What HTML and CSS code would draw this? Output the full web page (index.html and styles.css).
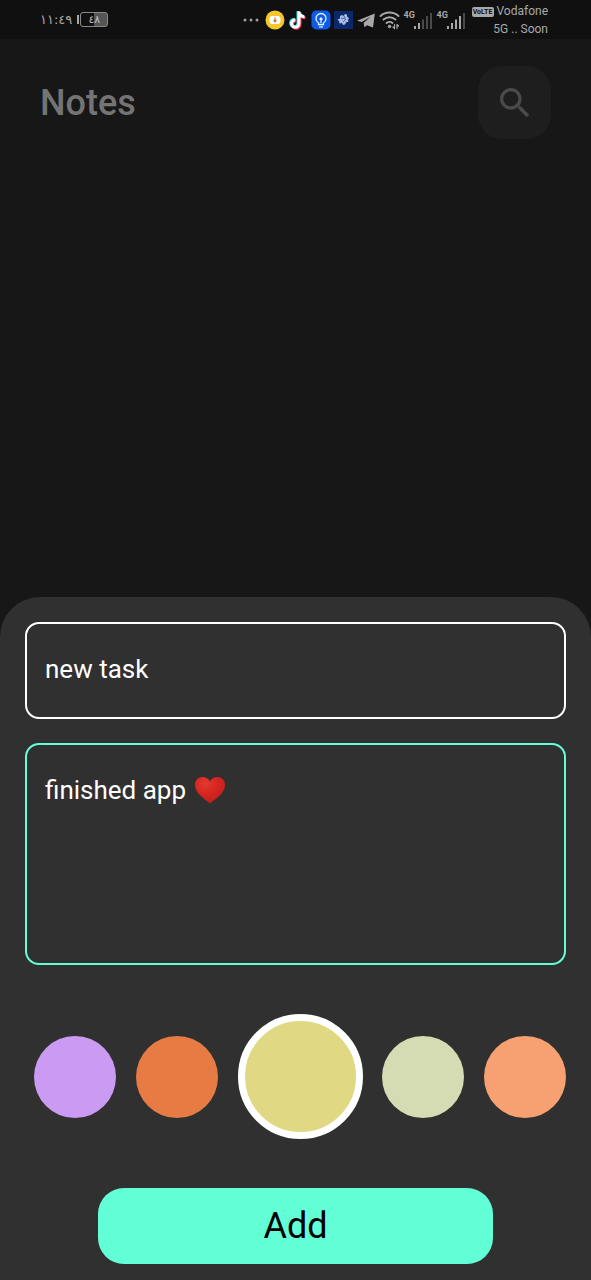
FILE: index.html
```html
<!DOCTYPE html>
<html lang="en">
<head>
<meta charset="utf-8">
<meta name="viewport" content="width=device-width, initial-scale=1">
<title>Notes</title>
<link rel="stylesheet" href="styles.css">
</head>
<body>
<div class="status">
  <span class="clock">١١:٤٩</span>
  <span class="battery"><span class="battery-tip"></span><span class="battery-body">٤٨</span></span>
  <div class="status-icons">
    <svg width="16" height="20" viewBox="0 0 16 20" fill="#a0a0a0"><circle cx="2" cy="10" r="1.5"/><circle cx="8" cy="10" r="1.5"/><circle cx="14" cy="10" r="1.5"/></svg>
    <svg class="gap-wide" width="20" height="20" viewBox="0 0 20 20"><circle cx="10" cy="10" r="9.5" fill="#f6c62c"/><rect x="4.5" y="6" width="11" height="8" rx="3" fill="#fff"/><path d="M10 7.500v4M8.500 10.300l1.500 1.500 1.500-1.500" stroke="#c8811c" stroke-width="1.300" fill="none"/></svg>
    <svg width="20" height="20" viewBox="-1 0 20 20" fill="none" stroke-width="3"><path d="M9 1v12a3.700 3.700 0 1 1-3.700-3.700M9 1.500c.5 3 2.500 4.500 5.500 4.700" stroke="#25e0dc"/><path d="M11 2.500v12a3.700 3.700 0 1 1-3.700-3.700M11 3c.5 3 2.500 4.500 5.500 4.700" stroke="#f52c58"/><path d="M10 1.500v12a3.700 3.700 0 1 1-3.700-3.700M10 2c.5 3 2.500 4.700 5.500 4.900" stroke="#fff"/></svg>
    <svg width="20" height="20" viewBox="0 0 20 20"><rect x=".5" y=".5" width="19" height="19" rx="5" fill="#0c5bea"/><path d="M7.500 14.500v-1.500C6 12 5 10.500 5 8.500a5 5 0 0 1 10 0c0 2-1 3.500-2.500 4.500v1.500zM8 16.800h4M10 13V8.500M8.500 9.500l1.500-1.500 1.500 1.500" fill="none" stroke="#e6f0ff" stroke-width="1.300"/></svg>
    <svg width="19" height="20" viewBox="0 0 19 20"><path fill="#0b286b" d="M0 1h19v18H0z"/><path fill="#a9bce8" d="M6 6l2-1 1.500 1L11 4l2 .5v2l2 1.500-1 2 .5 1.500-2.500 1-1 2-2 .5-1-2-2.500.500L5 11l-1.500-1.500L6 8.500z"/><path d="M7 8l5 1-3 3M10 6l1 2" stroke="#5365a0" fill="none"/></svg>
    <svg width="20" height="20" viewBox="0 0 20 20"><path fill="#a8a8a8" d="M1 10.800 18.800 3.500 17 17.500l-6-2.300-2.500 2-1-4.200 7-6.200L5.800 12z"/></svg>
    <svg width="22" height="20" viewBox="0 0 22 20" fill="none" stroke="#a8a8a8" stroke-width="1.900" stroke-linecap="round"><path d="M1.500 6a13.500 13.500 0 0 1 18 0M4.500 9.500a9 9 0 0 1 12 0M7.500 13a5 5 0 0 1 6 0"/><circle cx="10.500" cy="16.500" r="1.300" fill="#a8a8a8" stroke-width="1"/><path d="M15.500 14.500v4M14 17l1.500 1.500M18 18.500v-4M18 14.500l1.500 1.500" stroke-width="1.200"/></svg>
    <span class="signal"><span>4G</span><svg width="20" height="20" viewBox="0 0 20 20"><path fill="#a8a8a8" d="M1 16h2v3H1zM5 13h2v6H5z"/><path fill="#4a4a4a" d="M9 9.500h2V19H9zM13 6h2v13h-2zM17 3h2v16h-2z"/></svg></span>
    <span class="signal"><span>4G</span><svg width="20" height="20" viewBox="0 0 20 20"><path fill="#a8a8a8" d="M1 16h2v3H1zM5 13h2v6H5zM9 9.500h2V19H9zM13 6h2v13h-2z"/><path fill="#4a4a4a" d="M17 3h2v16h-2z"/></svg></span>
    <div class="carrier"><span><b class="volte">VoLTE</b> Vodafone</span><span>5G .. Soon</span></div>
  </div>
</div>
<header class="header">
  <h1 class="title">Notes</h1>
  <button class="search" type="button" aria-label="Search"><svg width="40" height="40" viewBox="0 0 24 24" fill="#4a4a4a"><path d="M15.500 14h-.79l-.28-.27A6.470 6.470 0 0 0 16 9.500 6.500 6.500 0 1 0 9.500 16c1.610 0 3.090-.59 4.230-1.570l.27.28v.79l5 4.990L20.490 19zm-6 0C7.010 14 5 11.990 5 9.500S7.010 5 9.500 5 14 7.010 14 9.500 11.990 14 9.500 14z"/></svg></button>
</header>
<form class="sheet">
  <input class="field" type="text" aria-label="Title" value="new task">
  <div class="content">
    <textarea class="field field-active" aria-label="Content">finished app</textarea>
    <svg class="heart" width="32" height="28" viewBox="0 0 32 28"><defs><radialGradient id="red" cx=".35" cy=".25" r=".8"><stop offset="0" stop-color="#e23a30"/><stop offset=".5" stop-color="#d6251f"/><stop offset="1" stop-color="#be201c"/></radialGradient></defs><path fill="url(#red)" d="M16 27.500C12.500 24 1 18 1 9 1 4 4.300 1 8.500 1 12 1 14.800 2.500 16 5.500 17.200 2.500 20 1 23.500 1 27.700 1 31 4 31 9c0 9-11.500 15-15 18.500z"/></svg>
  </div>
  <div class="colors" role="radiogroup" aria-label="Color">
    <input class="swatch purple" type="radio" name="color" aria-label="Purple">
    <input class="swatch orange" type="radio" name="color" aria-label="Orange">
    <input class="swatch yellow" type="radio" name="color" aria-label="Yellow" checked>
    <input class="swatch sage" type="radio" name="color" aria-label="Sage">
    <input class="swatch peach" type="radio" name="color" aria-label="Peach">
  </div>
  <button class="add" type="button">Add</button>
</form>
</body>
</html>
```
FILE: styles.css
```css
* { box-sizing: border-box; }
body {
  margin: 0;
  min-height: 100vh;
  display: flex;
  flex-direction: column;
  background: #171717;
  font-family: Roboto, "DejaVu Sans", sans-serif;
}
svg { display: block; flex: none; }
.status {
  display: flex;
  align-items: center;
  height: 39px;
  padding: 0 43px 0 40px;
  background: #101010;
  color: #a8a8a8;
  font-size: 12px;
}
.clock { font-size: 13px; font-family: "DejaVu Sans", sans-serif; direction: ltr; unicode-bidi: bidi-override; }
.battery { display: flex; align-items: center; gap: 1px; margin-left: 5px; }
.battery-tip { width: 2px; height: 9px; background: #a8a8a8; }
.battery-body {
  width: 28px;
  height: 15px;
  border: 1px solid #8a8a8a;
  border-radius: 3px;
  background: linear-gradient(90deg, transparent 50%, #555 50%);
  color: #bbb;
  font: 11px/13px "DejaVu Sans", sans-serif;
  text-align: center;
  direction: ltr;
  unicode-bidi: bidi-override;
}
.status-icons { display: flex; align-items: center; gap: 3px; margin-left: auto; }
.gap-wide { margin-left: 3px; }
.signal { display: flex; height: 20px; }
.signal span { width: 9px; font-size: 9px; line-height: 10px; font-weight: 700; }
.signal + .signal { margin-left: 1px; }
.carrier {
  display: flex;
  flex-direction: column;
  align-items: flex-end;
  margin-left: 3px;
  line-height: 18px;
  white-space: nowrap;
}
.volte {
  display: inline-block;
  width: 22px;
  border-radius: 2px;
  background: #a8a8a8;
  color: #101010;
  font-size: 7px;
  line-height: 10px;
  text-align: center;
  vertical-align: 1px;
}
.header {
  display: flex;
  align-items: center;
  justify-content: space-between;
  padding: 27px 40px;
}
.title { margin: 0; font-size: 36px; line-height: 42px; font-weight: 500; color: #747474; }
.search {
  display: grid;
  place-items: center;
  width: 73px;
  height: 73px;
  padding: 0;
  border: 0;
  border-radius: 24px;
  background: #1e1e1e;
}
.sheet {
  display: flex;
  flex-direction: column;
  margin-top: auto;
  padding: 25px 25px 16px;
  border-radius: 40px 40px 0 0;
  background: #303030;
}
.field {
  display: block;
  width: 100%;
  height: 97px;
  padding: 0 18px 4px;
  border: 2px solid #fff;
  border-radius: 14px;
  outline: 0;
  background: transparent;
  color: #fff;
  font: 26px/30px Roboto, sans-serif;
}
.content { position: relative; margin-top: 24px; }
.field-active {
  height: 222px;
  padding: 30px 18px;
  border-color: #62ffd7;
  resize: none;
}
.heart { position: absolute; left: 169px; top: 33px; }
.colors {
  display: flex;
  align-items: center;
  justify-content: space-between;
  margin: 49px 0;
  padding-left: 9px;
}
.swatch {
  appearance: none;
  flex: none;
  width: 82px;
  height: 82px;
  margin: 0;
  border-radius: 50%;
}
.swatch:checked { width: 125px; height: 125px; border: 7px solid #fff; }
.purple { background: #cb9bf3; }
.orange { background: #e67b44; }
.yellow { background: #e1d884; }
.sage { background: #d5dbb2; }
.peach { background: #f7a172; }
.add {
  align-self: center;
  width: 73%;
  height: 76px;
  padding: 0;
  border: 0;
  border-radius: 26px;
  background: #62ffd7;
  color: #000;
  font: 36px/42px Roboto, sans-serif;
}
```
